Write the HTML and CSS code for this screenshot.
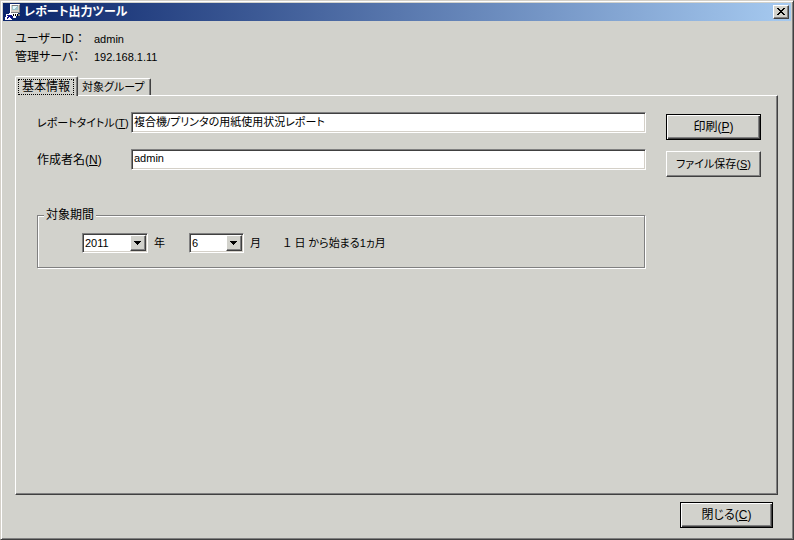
FILE: index.html
```html
<!DOCTYPE html>
<html lang="ja">
<head>
    <meta charset="UTF-8">
    <meta name="viewport" content="width=device-width, initial-scale=1.0">
    <title>レポート出力ツール</title>
    <link rel="stylesheet" href="styles.css">
</head>
<body>

    <div class="window">
        <header class="titlebar">
            <svg class="app-icon" width="16" height="16" viewBox="0 0 16 16" shape-rendering="crispEdges" aria-hidden="true">
                <path fill="#d4d0c8" d="M5 0h10v9H5z"/>
                <path fill="#fff" d="M5 0h9v1H5zM5 0h1v9H5z"/>
                <path fill="#9cc4cc" d="M7 2h6v4H7z"/>
                <path fill="#e4f8fc" d="M8 2h4v1h-1v1h-1v1H8z"/>
                <path fill="#808080" d="M7 1h6v1H7zM14 1h1v8h-1zM6 8h8v1H6z"/>
                <path fill="#808080" d="M13 10h2v2h-2z"/>
                <path fill="#fff" d="M4 9h9v2H4zM7 11h6v1H7zM8 12h3v2H8z"/>
                <path fill="#000" d="M8 10h1v2H8zM10 10h1v2h-1zM12 10h1v2h-1z"/>
                <path fill="#fff" d="M1 10h6v6H1zM0 13h1v3H0z"/>
                <path fill="#10108c" d="M2 11h5v4H6v-1H5v-1H4v1H3v1H2v-2h1v-1H2z"/>
            </svg>
            <h1>レポート出力ツール</h1>
            <button type="button" class="close" aria-label="閉じる">
                <svg width="8" height="7" viewBox="0 0 8 7" shape-rendering="crispEdges" aria-hidden="true">
                    <path d="M0 0h2v1H0zM6 0h2v1H6zM1 1h2v1H1zM5 1h2v1H5zM2 2h4v1H2zM3 3h2v1H3zM2 4h4v1H2zM1 5h2v1H1zM5 5h2v1H5zM0 6h2v1H0zM6 6h2v1H6z"/>
                </svg>
            </button>
        </header>

        <main class="content">
            <dl class="session">
                <dt>ユーザーID ：</dt>
                <dd>admin</dd>
                <dt>管理サーバ：</dt>
                <dd>192.168.1.11</dd>
            </dl>

            <div class="tabs" role="tablist">
                <button type="button" class="tab active" role="tab" aria-selected="true"><span>基本情報</span></button>
                <button type="button" class="tab" role="tab" aria-selected="false"><span>対象グループ</span></button>
            </div>

            <div class="panel" role="tabpanel">
                <form class="form">
                    <div class="row">
                        <label for="reportTitle">レポートタイトル(<u>T</u>)</label>
                        <input type="text" id="reportTitle" value="複合機/プリンタの用紙使用状況レポート">
                    </div>
                    <div class="row">
                        <label for="author" class="kanji">作成者名(<u>N</u>)</label>
                        <input type="text" id="author" value="admin">
                    </div>

                    <fieldset class="period">
                        <legend class="kanji">対象期間</legend>
                        <div class="period-fields">
                            <span class="combo year">
                                <select id="year">
                                    <option>2010</option>
                                    <option selected>2011</option>
                                </select>
                                <svg class="arrow" width="7" height="4" viewBox="0 0 7 4" shape-rendering="crispEdges" aria-hidden="true"><path d="M0 0h7v1H0zM1 1h5v1H1zM2 2h3v1H2zM3 3h1v1H3z"/></svg>
                            </span>
                            <label for="year">年</label>
                            <span class="combo month">
                                <select id="month">
                                    <option>5</option>
                                    <option selected>6</option>
                                </select>
                                <svg class="arrow" width="7" height="4" viewBox="0 0 7 4" shape-rendering="crispEdges" aria-hidden="true"><path d="M0 0h7v1H0zM1 1h5v1H1zM2 2h3v1H2zM3 3h1v1H3z"/></svg>
                            </span>
                            <label for="month">月</label>
                            <span class="range">１ 日 から始まる1ヵ月</span>
                        </div>
                    </fieldset>
                </form>

                <div class="actions">
                    <button type="button" class="button default kanji">印刷(<u>P</u>)</button>
                    <button type="button" class="button">ファイル保存(<u>S</u>)</button>
                </div>
            </div>

            <footer class="footer">
                <button type="button" class="button default kanji">閉じる(<u>C</u>)</button>
            </footer>
        </main>
    </div>

</body>
</html>
```

FILE: styles.css
```css
* {
    box-sizing: border-box;
}
body {
    margin: 0;
    background-color: #d2d2cc;
}
body, button, input, select {
    font-family: "Liberation Sans", "Noto Sans CJK JP", sans-serif;
    font-size: 11px;
    line-height: 18px;
    font-feature-settings: "palt";
    color: #000;
}
.window {
    display: flex;
    flex-direction: column;
    min-height: 100vh;
    padding: 1px;
    border: 1px solid;
    border-color: #d4d0c8 #404040 #404040 #d4d0c8;
    box-shadow: inset 1px 1px #fff, inset -1px -1px #808080;
}
.titlebar {
    display: flex;
    align-items: center;
    height: 18px;
    margin: 1px 1px 0;
    padding: 0 2px;
    background: linear-gradient(to right, #0a246a, #a6caf0);
}
.titlebar h1 {
    flex: 1;
    margin: 0 0 0 3px;
    font-size: 12px;
    line-height: 18px;
    color: #fff;
}
.close {
    display: flex;
    align-items: center;
    justify-content: center;
    width: 16px;
    height: 14px;
    padding: 0 1px 1px 0;
    border: 1px solid;
    border-color: #fff #404040 #404040 #fff;
    background-color: #d2d2cc;
    box-shadow: inset -1px -1px #808080;
}
.content {
    flex: 1;
    display: flex;
    flex-direction: column;
    padding: 9px 14px 10px 13px;
}
.session {
    display: grid;
    grid-template-columns: 79px 1fr;
    margin: 0 0 10px;
}
.session dt, .kanji {
    font-size: 12px;
}
.session dd {
    margin: 0;
}
.tabs {
    display: flex;
    align-items: flex-end;
}
.tab {
    height: 17px;
    padding: 0 5px 0 3px;
    border: 1px solid;
    border-color: #fff #404040 transparent transparent;
    border-bottom: 0;
    border-radius: 2px 2px 0 0;
    background-color: #d2d2cc;
    box-shadow: inset -1px 0 #808080;
    line-height: 16px;
}
.tab span {
    display: block;
}
.tab.active {
    position: relative;
    height: 20px;
    margin-bottom: -1px;
    padding: 2px 3px 1px 2px;
    border-left-color: #fff;
    font-size: 12px;
}
.tab.active span {
    padding: 0 4px;
    outline: 1px dotted #000;
    outline-offset: -1px;
}
.panel {
    flex: 1;
    display: flex;
    align-items: flex-start;
    gap: 20px;
    padding: 16px 16px 16px 21px;
    border: 1px solid;
    border-color: #fff #404040 #404040 #fff;
    box-shadow: inset -1px -1px #808080;
}
.form {
    flex: 1;
}
.row {
    display: flex;
    align-items: center;
    margin-bottom: 16px;
}
.row label {
    width: 94px;
    white-space: nowrap;
}
.row input {
    flex: 1;
    min-width: 0;
    height: 21px;
    padding: 0 2px 3px;
    border: 1px solid;
    border-color: #808080 #fff #fff #808080;
    border-radius: 0;
    background-color: #fff;
    box-shadow: inset 1px 1px #404040, inset -1px -1px #d4d0c8;
}
.period {
    margin: 36px 1px 0 0;
    padding: 0 0 14px 44px;
    border: 1px solid #808080;
    box-shadow: 1px 1px #fff, inset 1px 1px #fff;
}
.period legend {
    margin-left: -38px;
    padding: 0 2px;
    background-color: #d2d2cc;
}
.period-fields {
    display: flex;
    align-items: center;
    padding-top: 9px;
}
.combo {
    position: relative;
    display: flex;
    margin-right: 6px;
}
.combo select {
    width: 100%;
    height: 20px;
    padding: 0 18px 0 2px;
    border: 1px solid;
    border-color: #808080 #fff #fff #808080;
    border-radius: 0;
    background-color: #fff;
    box-shadow: inset 1px 1px #404040, inset -1px -1px #d4d0c8;
    line-height: 16px;
    appearance: none;
}
.year {
    width: 66px;
}
.month {
    width: 55px;
    margin-left: 24px;
}
/* drop button drawn over the right end of the select */
.arrow {
    position: absolute;
    top: 2px;
    right: 2px;
    width: 16px;
    height: 16px;
    padding: 5px 4px 5px 3px;
    border: 1px solid;
    border-color: #fff #404040 #404040 #fff;
    background-color: #d2d2cc;
    box-shadow: inset -1px -1px #808080;
    pointer-events: none;
}
.range {
    margin-left: 22px;
    white-space: pre;
}
.actions {
    display: flex;
    flex-direction: column;
    gap: 11px;
    width: 95px;
    padding-top: 2px;
}
.button {
    height: 26px;
    padding: 0;
    border: 1px solid;
    border-color: #fff #404040 #404040 #fff;
    background-color: #d2d2cc;
    box-shadow: inset -1px -1px #808080;
}
.button.default {
    border-color: #000;
    box-shadow: inset 1px 1px #fff, inset -1px -1px #404040, inset -2px -2px #808080;
}
.footer {
    display: flex;
    justify-content: flex-end;
    padding: 7px 5px 0 0;
}
.footer .button {
    width: 93px;
}
```
